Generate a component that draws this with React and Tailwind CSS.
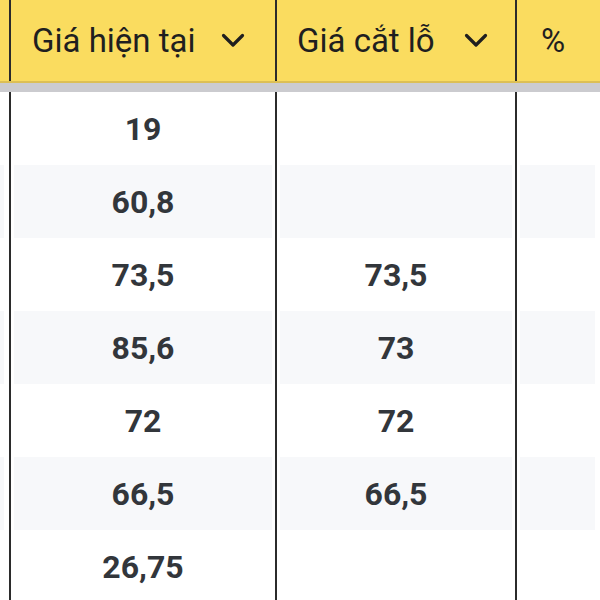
import { Fragment } from 'react';

const ROWS = [
  { current: '19', stop: '' },
  { current: '60,8', stop: '' },
  { current: '73,5', stop: '73,5' },
  { current: '85,6', stop: '73' },
  { current: '72', stop: '72' },
  { current: '66,5', stop: '66,5' },
  { current: '26,75', stop: '' },
];

function Chevron() {
  return (
    <svg width="24" height="15" viewBox="0 0 24 15" fill="none" className="shrink-0">
      <polyline points="2.5,2.5 12,12 21.5,2.5" stroke="#1f1f1f" strokeWidth="3.2" strokeLinecap="round" strokeLinejoin="round" />
    </svg>
  );
}

function Cell({ striped, className = '', children }) {
  return (
    <div className={`h-full border-l-2 border-[#2b2b2b] ${className}`}>
      <div className={`h-full mx-[3px] flex items-center justify-center ${striped ? 'bg-[#f7f8fa]' : 'bg-white'}`}>
        {children}
      </div>
    </div>
  );
}

export default function App() {
  return (
    <div className="w-[600px] h-[600px] overflow-hidden bg-white font-['Roboto','Liberation_Sans',sans-serif]">
      {/* header */}
      <div className="flex h-[83px] bg-[#fadc5f] border-b-2 border-[#dcbf55] text-[33px] text-[#1f1f1f]">
        <div className="w-[9px] shrink-0" />
        <div className="w-[266px] shrink-0 border-l-2 border-[#2b2b2b] flex items-center justify-between pl-[21px] pr-[30px]">
          <span>Giá hiện tại</span>
          <Chevron />
        </div>
        <div className="w-[240px] shrink-0 border-l-2 border-[#2b2b2b] flex items-center justify-between pl-[20px] pr-[27px]">
          <span>Giá cắt lỗ</span>
          <Chevron />
        </div>
        <div className="flex-1 border-l-2 border-[#2b2b2b] flex items-center pl-[24px]">
          <span>%</span>
        </div>
      </div>
      <div className="h-[9px] bg-[#cbcbcf]" />

      {/* body */}
      <div className="text-[32px] font-bold text-[#32363b]">
        {ROWS.map((r, i) => {
          const striped = i % 2 === 1;
          return (
            <div key={i} className="flex h-[73px]">
              <div className="w-[9px] shrink-0">
                <div className={`h-full w-[4px] ${striped ? 'bg-[#f7f8fa]' : ''}`} />
              </div>
              <Cell striped={striped} className="w-[266px] shrink-0">{r.current}</Cell>
              <Cell striped={striped} className="w-[240px] shrink-0">{r.stop}</Cell>
              <div className="flex-1 border-l-2 border-[#2b2b2b]">
                <div className={`h-full ml-[3px] w-[75px] ${striped ? 'bg-[#f7f8fa]' : ''}`} />
              </div>
            </div>
          );
        })}
      </div>
    </div>
  );
}
